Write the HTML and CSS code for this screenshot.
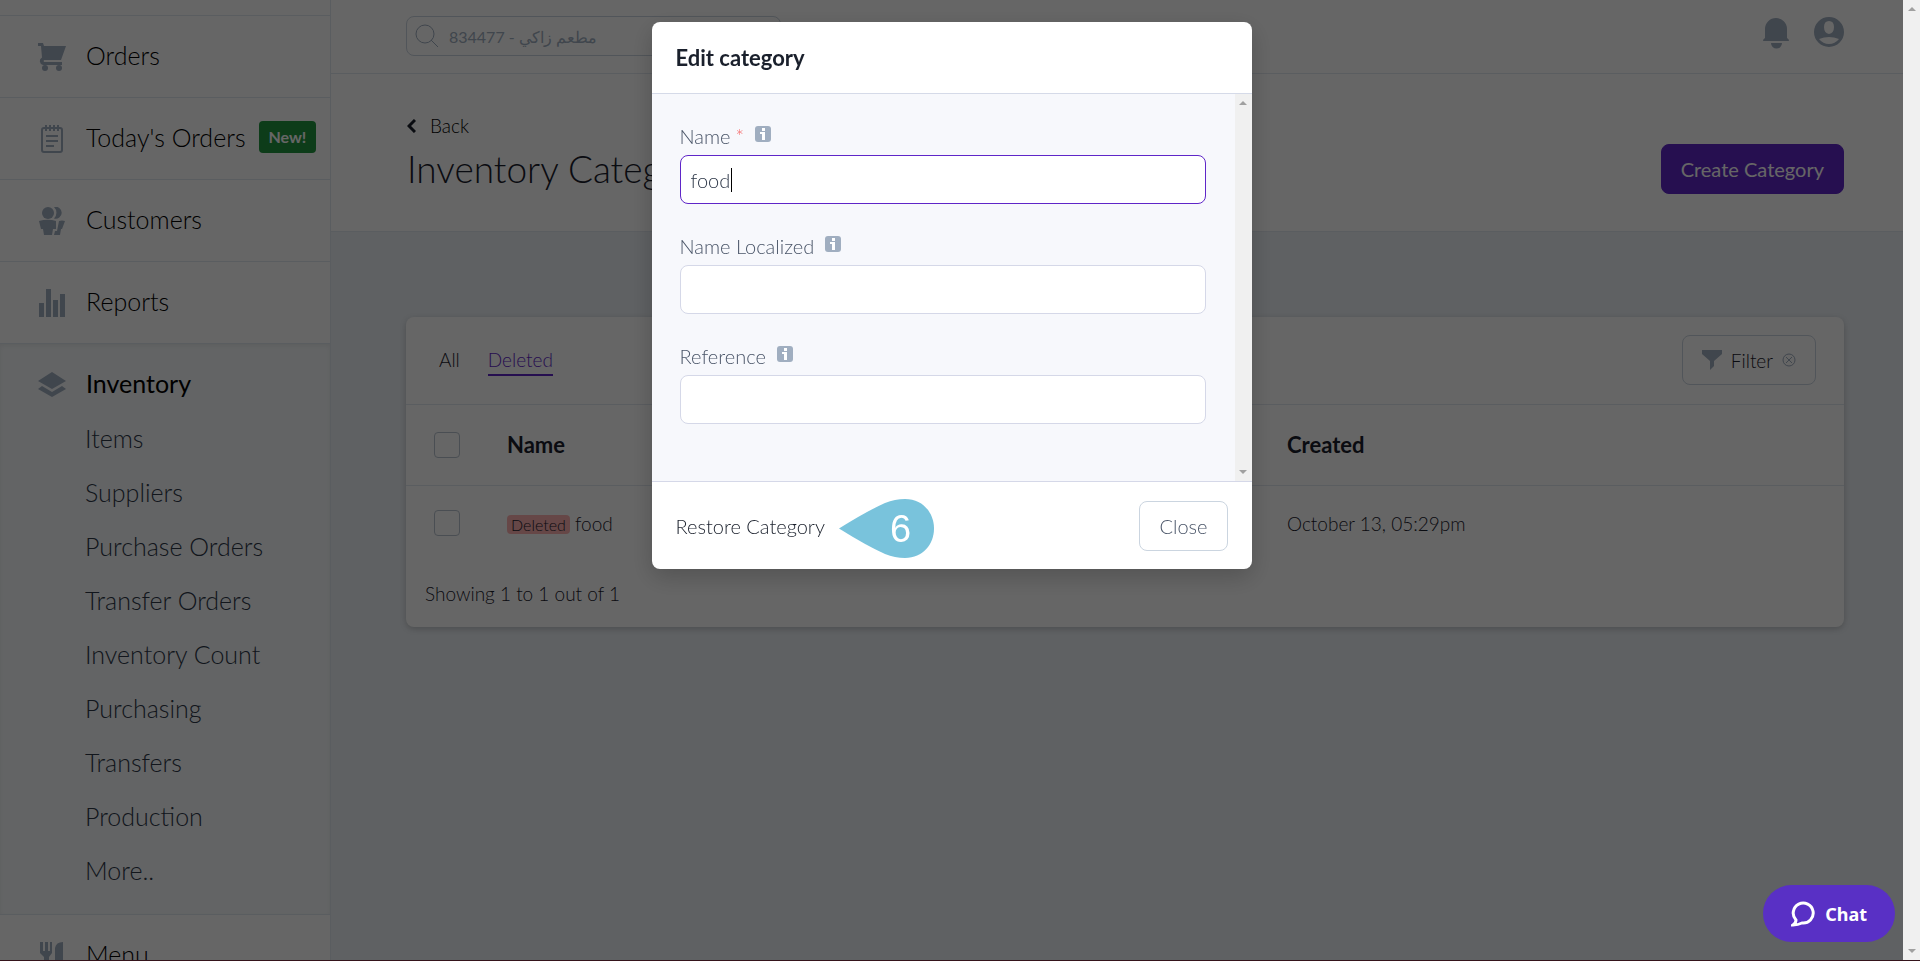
FILE: index.html
```html
<!DOCTYPE html>
<html lang="en">
<head>
    <meta charset="UTF-8">
    <meta name="viewport" content="width=device-width, initial-scale=1.0">
    <title>Inventory Categories</title>
    <link rel="stylesheet" href="styles.css">
</head>
<body>
    <div id="app">
        <nav class="sidebar">
            <ul class="nav-list">
                <li class="nav-item nav-cut"></li>
                <li class="nav-item">
                    <a href="#">
                        <svg class="nav-icon" viewBox="0 0 28 28"><path d="M0 0h5l1 3h22l-5 14H6a1.500 1.500 0 0 0 0 2h18v3H5a4 4 0 0 1-1-7.500L3 3H0z"/><circle cx="7" cy="25" r="3"/><circle cx="21" cy="25" r="3"/></svg>
                        <span>Orders</span>
                    </a>
                </li>
                <li class="nav-item">
                    <a href="#">
                        <svg class="nav-icon" viewBox="0 0 28 28"><g fill="none" stroke="#a0aec0" stroke-width="2"><rect x="4" y="3" width="20" height="24" rx="2"/><path d="M8 0v6M12 0v6M16 0v6M20 0v6M8 11h12M8 16h12M8 21h8"/></g></svg>
                        <span>Today's Orders</span>
                        <span class="badge-new">New!</span>
                    </a>
                </li>
                <li class="nav-item">
                    <a href="#">
                        <svg class="nav-icon" viewBox="0 0 28 28"><circle cx="10" cy="6" r="6"/><path d="M16 0a6 6 0 1 1 0 11.500 8 8 0 0 0 0-11.500zM1 14q9-2.500 17 0v8h-3l-1 6H6l-1-6H3zM21 14q3-1 6 0l-3 8h-1l-1 6h-6l1-4h2z"/></svg>
                        <span>Customers</span>
                    </a>
                </li>
                <li class="nav-item">
                    <a href="#">
                        <svg class="nav-icon" viewBox="0 0 28 28"><path d="M1 14h5v14H1zM8 0h5v28H8zM15 11h5v17h-5zM22 5h5v23h-5z"/></svg>
                        <span>Reports</span>
                    </a>
                </li>
                <li class="nav-item nav-open">
                    <a href="#">
                        <svg class="nav-icon" viewBox="0 0 28 28"><path d="M14 1l14 9-14 8L0 10zM4 15l10 6 10-6 4 3-14 8-14-8z"/></svg>
                        <span>Inventory</span>
                    </a>
                    <ul class="sub-list">
                        <li><a href="#">Items</a></li>
                        <li><a href="#">Suppliers</a></li>
                        <li><a href="#">Purchase Orders</a></li>
                        <li><a href="#">Transfer Orders</a></li>
                        <li><a href="#">Inventory Count</a></li>
                        <li><a href="#">Purchasing</a></li>
                        <li><a href="#">Transfers</a></li>
                        <li><a href="#">Production</a></li>
                        <li><a href="#">More..</a></li>
                    </ul>
                </li>
                <li class="nav-item">
                    <a href="#">
                        <svg class="nav-icon" viewBox="0 0 28 28"><path d="M2 0h3v9h2V0h3v9h2V0h2v11l-3 4v13H6V15l-4-4zM25 0v28h-4v-9h-4V6q1-6 8-6z"/></svg>
                        <span>Menu</span>
                    </a>
                </li>
            </ul>
        </nav>

        <div class="main">
            <header class="topbar">
                <label class="search">
                    <svg width="24" height="24" viewBox="0 0 24 24" fill="none" stroke="#a0aec0" stroke-width="1"><circle cx="10" cy="10" r="9"/><path d="M16 16l7 7"/></svg>
                    <input type="text" aria-label="Search" placeholder="834477 - مطعم زاكي">
                </label>
                <div class="topbar-icons">
                    <svg width="26" height="32" viewBox="0 0 26 32"><path d="M2 21V12a11 11 0 0 1 22 0v9q2 1 2 3H0q0-2 2-3zM8 26h11a5.500 5.500 0 0 1-11 0z"/></svg>
                    <svg width="30" height="30" viewBox="0 0 30 30"><path fill-rule="evenodd" d="M15 0a15 15 0 1 1 0 30 15 15 0 0 1 0-30zM15 4q-5 0-5 6t5 7q5-1 5-7t-5-6zM5 22q4 5 10 5t10-5q-10-4-20 0z"/></svg>
                </div>
            </header>

            <section class="page-head">
                <div>
                    <a class="back" href="#">
                        <svg width="9" height="14" viewBox="0 0 9 14" fill="none" stroke="#1a202c" stroke-width="3"><path d="M8 1L2 7l6 6"/></svg>
                        Back
                    </a>
                    <h1>Inventory Categories</h1>
                </div>
                <button class="btn btn-primary">Create Category</button>
            </section>

            <section class="card">
                <div class="toolbar">
                    <div class="tabs">
                        <a href="#">All</a>
                        <a href="#" class="active">Deleted</a>
                    </div>
                    <button class="btn btn-filter">
                        <svg width="20" height="20" viewBox="0 0 20 20" fill="#a0aec0"><path d="M0 0h20v4l-8 7v5l-4 4v-9L0 4z"/></svg>
                        Filter
                        <svg width="14" height="14" viewBox="0 0 14 14" fill="none" stroke="#a0aec0"><circle cx="7" cy="7" r="6"/><path d="M4 4l6 6M10 4l-6 6"/></svg>
                    </button>
                </div>
                <table>
                    <thead>
                        <tr>
                            <th class="col-check"><input type="checkbox" aria-label="Select all"></th>
                            <th>Name</th>
                            <th class="col-created">Created</th>
                        </tr>
                    </thead>
                    <tbody>
                        <tr>
                            <td class="col-check"><input type="checkbox" aria-label="Select food"></td>
                            <td><span class="tag">Deleted</span> food</td>
                            <td class="col-created">October 13, 05:29pm</td>
                        </tr>
                    </tbody>
                </table>
                <p class="count">Showing 1 to 1 out of 1</p>
            </section>
        </div>
    </div>

    <div class="overlay">
        <form class="modal" role="dialog" aria-labelledby="modal-title">
            <h2 id="modal-title">Edit category</h2>
            <div class="modal-body">
                <div class="fields">
                    <div class="field">
                        <label for="name">Name <span class="required">*</span>
                            <svg class="info" viewBox="0 0 16 16"><rect width="16" height="16" rx="3"/><path d="M7 2h3v3H7zM5 6h5v8H7V8H5z"/></svg>
                        </label>
                        <input type="text" id="name" class="focused" value="food">
                        <span class="caret"></span>
                    </div>
                    <div class="field">
                        <label for="name-localized">Name Localized
                            <svg class="info" viewBox="0 0 16 16"><rect width="16" height="16" rx="3"/><path d="M7 2h3v3H7zM5 6h5v8H7V8H5z"/></svg>
                        </label>
                        <input type="text" id="name-localized">
                    </div>
                    <div class="field">
                        <label for="reference">Reference
                            <svg class="info" viewBox="0 0 16 16"><rect width="16" height="16" rx="3"/><path d="M7 2h3v3H7zM5 6h5v8H7V8H5z"/></svg>
                        </label>
                        <input type="text" id="reference">
                    </div>
                </div>
                <div class="scrollbar"><i class="arrow-up"></i><i class="arrow-down"></i></div>
            </div>
            <div class="modal-foot">
                <a href="#">Restore Category</a>
                <div class="step">
                    <svg viewBox="0 0 95 59"><path d="M0 29.500Q28 12 46 4 56 0 66 0C84 0 95 14 95 29.500S84 59 66 59Q56 59 46 55 28 47 0 29.500z"/></svg>
                    <span>6</span>
                </div>
                <button type="button" class="btn btn-close">Close</button>
            </div>
        </form>
    </div>

    <button class="chat">
        <svg width="24" height="26" viewBox="0 0 24 26" fill="none" stroke="#fff" stroke-width="3"><path d="M5 19A10 10 0 1 1 11 22Q7 24 2 24 5 22 5 19z"/></svg>
        Chat
    </button>
    <div class="scrollbar page-scroll"><i class="arrow-up"></i><i class="arrow-down"></i></div>
</body>
</html>
```

FILE: styles.css
```css
* {
    box-sizing: border-box;
}

body {
    font-family: Lato, "Noto Sans", sans-serif;
    font-size: 19px;
    font-weight: 300;
    margin: 0;
    height: 100vh;
    overflow: hidden;
    color: #1a202c;
    background-color: #edf2f7;
    border-bottom: 1px solid #35141b;
}

a {
    color: inherit;
    text-decoration: none;
}

ul {
    list-style-type: none;
    margin: 0;
    padding: 0;
}

button, input {
    font: inherit;
    color: inherit;
}

#app {
    display: flex;
    height: 100%;
    padding-right: 17px;
    overflow: hidden;
}

/* sidebar */
.sidebar {
    width: 331px;
    flex-shrink: 0;
    background-color: #fff;
    border-right: 1px solid #e2e8f0;
}

.nav-item {
    border-bottom: 1px solid #e2e8f0;
    color: #000;
    font-size: 25px;
}

.nav-cut {
    height: 16px;
}

.nav-item > a {
    display: flex;
    align-items: center;
    height: 81px;
    padding-left: 38px;
}

.nav-item > a > span {
    margin-bottom: 3px;
}

.nav-icon {
    width: 28px;
    height: 28px;
    margin-right: 20px;
    fill: #a0aec0;
}

.badge-new {
    margin-left: 13px;
    padding: 0 10px;
    border-radius: 4px;
    background-color: #22963f;
    color: #fff;
    font-size: 16px;
    font-weight: 700;
    line-height: 32px;
}

.nav-open {
    background-color: #f7fafc;
    box-shadow: inset 0 2px 4px rgba(0, 0, 0, 0.06);
}

.nav-open > a {
    height: 67px;
    padding-top: 14px;
    font-weight: 400;
}

.sub-list {
    padding: 0 0 17px 85px;
    color: #2d3748;
    line-height: 54px;
}

/* main */
.main {
    flex: 1;
}

.topbar {
    display: flex;
    justify-content: space-between;
    height: 74px;
    padding: 16px 59px 0 75px;
    background-color: #fff;
    border-bottom: 1px solid #e2e8f0;
}

.search {
    display: flex;
    align-items: center;
    width: 375px;
    height: 40px;
    padding-left: 8px;
    border: 1px solid #cbd5e0;
    border-radius: 8px;
}

.search input {
    flex: 1;
    margin-left: 8px;
    border: none;
    outline: none;
    background: none;
    font-size: 16px;
    font-weight: 400;
}

.search input::placeholder {
    color: #a0aec0;
    opacity: 1;
}

.topbar-icons {
    display: flex;
    gap: 25px;
    padding-top: 1px;
    fill: #a0aec0;
}

.page-head {
    display: flex;
    justify-content: space-between;
    align-items: flex-end;
    height: 158px;
    padding: 0 59px 37px 76px;
    background-color: #fff;
    border-bottom: 1px solid #e2e8f0;
}

.back {
    display: flex;
    align-items: center;
    gap: 14px;
    margin-bottom: 10px;
    color: #000;
    line-height: 24px;
}

h1 {
    margin: 0 0 4px;
    font-size: 37px;
    font-weight: 300;
    line-height: 42px;
}

.btn {
    height: 50px;
    padding: 0 19px;
    border: 1px solid #cbd5e0;
    border-radius: 8px;
    background-color: #fff;
    cursor: pointer;
}

.btn-primary {
    border-color: #5f26c8;
    background-color: #5f26c8;
    color: #fff;
    font-size: 20px;
    font-weight: 400;
}

.card {
    margin: 85px 59px 0 75px;
    border-radius: 8px;
    background-color: #fff;
    box-shadow: 0 2px 6px rgba(0, 0, 0, 0.2);
}

.toolbar {
    display: flex;
    justify-content: space-between;
    align-items: center;
    height: 88px;
    padding: 0 28px 1px 33px;
    border-bottom: 1px solid #e2e8f0;
}

.tabs {
    display: flex;
    gap: 28px;
    line-height: 29px;
}

.tabs a {
    border-bottom: 2px solid transparent;
}

.tabs .active {
    border-color: #5f26c8;
    color: #5f26c8;
}

.btn-filter {
    display: flex;
    align-items: center;
    gap: 9px;
}

table {
    width: 100%;
    border-collapse: collapse;
}

th, td {
    padding: 0;
    height: 76px;
    text-align: left;
}

th {
    height: 80px;
    border-bottom: 1px solid #e2e8f0;
    font-size: 22px;
    font-weight: 700;
}

.col-check {
    width: 101px;
    padding-left: 28px;
}

.col-created {
    width: 557px;
}

input[type="checkbox"] {
    appearance: none;
    display: block;
    width: 26px;
    height: 26px;
    margin: 0;
    border: 1px solid #b8c2d0;
    border-radius: 4px;
}

.tag {
    display: inline-block;
    padding: 0 4px;
    border-radius: 4px;
    background-color: #feb2b2;
    font-size: 16px;
    line-height: 19px;
}

.count {
    margin: 0;
    padding: 17px 19px;
    line-height: 32px;
}

/* modal */
.overlay {
    position: fixed;
    inset: 0 17px 1px 0;
    padding-top: 22px;
    background-color: rgba(0, 0, 0, 0.6);
}

.modal {
    width: 600px;
    margin: 0 auto;
    border-radius: 8px;
    background-color: #fff;
    box-shadow: 0 8px 24px rgba(0, 0, 0, 0.2);
    font-size: 20px;
}

.modal h2 {
    margin: 0;
    padding: 0 24px;
    font-size: 22px;
    font-weight: 700;
    line-height: 71px;
    border-bottom: 1px solid #d5dae8;
}

.modal-body {
    display: flex;
    background-color: #f7f8fc;
    border-bottom: 1px solid #d5d8e8;
}

.fields {
    flex: 1;
    padding: 28px 29px 29px 28px;
}

.field {
    position: relative;
    padding-bottom: 28px;
}

.field label {
    display: flex;
    align-items: center;
    height: 33px;
    padding-bottom: 5px;
    color: #4a5568;
}

.required {
    margin-left: 5px;
    color: #f56565;
}

.info {
    width: 16px;
    height: 16px;
    margin: 0 0 4px 11px;
    fill: #a0aec0;
}

.info path {
    fill: #fff;
}

.field input {
    display: block;
    width: 100%;
    height: 49px;
    padding: 0 10px;
    border: 1px solid #d5d8e8;
    border-radius: 8px;
    outline: none;
    background-color: #fff;
    color: #2d3748;
}

.field .focused {
    border-color: #5f26c8;
}

/* text cursor in the focused box */
.caret {
    position: absolute;
    left: 51px;
    top: 46px;
    width: 1px;
    height: 24px;
    background-color: #000;
}

.modal-foot {
    display: flex;
    align-items: center;
    height: 87px;
    padding: 0 24px;
}

.step {
    position: relative;
    width: 95px;
    height: 59px;
    margin: 6px 0 0 14px;
}

.step svg {
    display: block;
    fill: #79c3dc;
}

.step span {
    position: absolute;
    left: 51px;
    top: 9px;
    color: #fff;
    font-family: "Liberation Sans", Arial, sans-serif;
    font-size: 38px;
    font-weight: 400;
    line-height: 42px;
}

.btn-close {
    margin-left: auto;
    color: #4a5568;
}

.chat {
    position: fixed;
    right: 25px;
    bottom: 19px;
    display: flex;
    align-items: center;
    gap: 10px;
    height: 57px;
    padding: 0 28px;
    border: none;
    border-radius: 29px;
    background-color: #5930c5;
    color: #fff;
    font-family: "Noto Sans", sans-serif;
    font-size: 18px;
    font-weight: 700;
}

/* scrollbars */
.scrollbar {
    display: flex;
    flex-direction: column;
    justify-content: space-between;
    align-items: center;
    width: 17px;
    padding: 7px 0;
    background-color: #f0f0f0;
}

.page-scroll {
    position: fixed;
    inset: 0 0 1px auto;
}

.arrow-up, .arrow-down {
    border: 4px solid transparent;
}

.arrow-up {
    border-top: none;
    border-bottom-color: #a0a0a0;
}

.arrow-down {
    border-bottom: none;
    border-top-color: #a0a0a0;
}
```
